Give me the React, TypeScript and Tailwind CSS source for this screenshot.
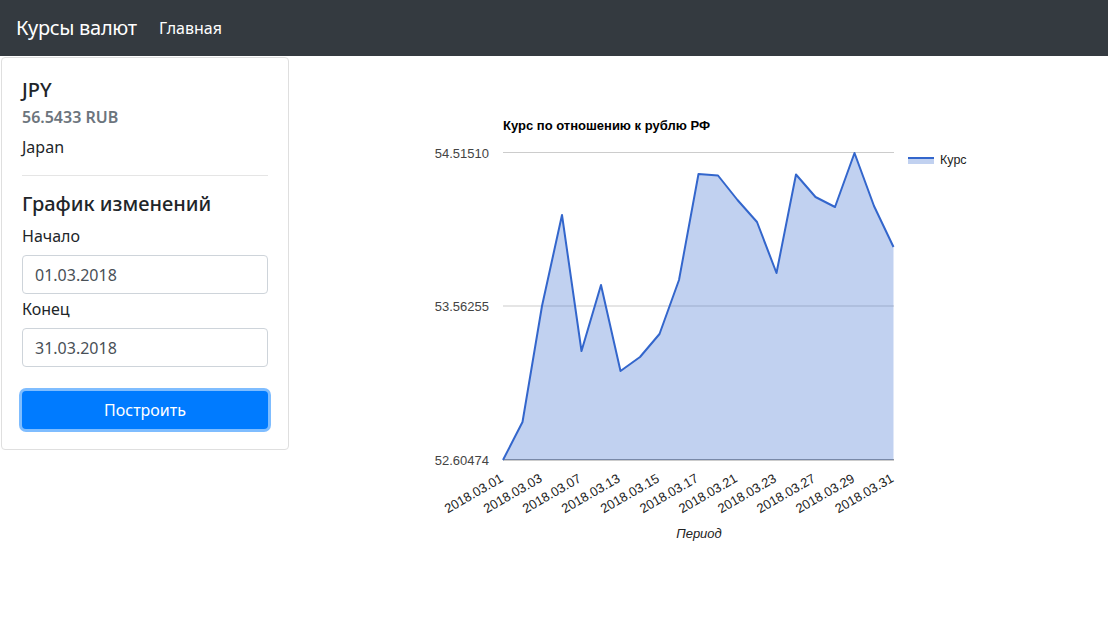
import React from "react";

const pts: [number, number][] = [
  [503, 460], [522.5, 422], [542, 306], [562, 215], [581.5, 351], [601, 285],
  [620.5, 371], [640, 357], [659.5, 334], [679, 280], [698.5, 174], [718, 175.5],
  [737.5, 200], [757, 222], [776.5, 273], [796, 174.5], [815.5, 197], [835, 207],
  [854.5, 153], [874, 206], [893.5, 247],
];

const labels = [
  "2018.03.01", "2018.03.03", "2018.03.07", "2018.03.13", "2018.03.15", "2018.03.17",
  "2018.03.21", "2018.03.23", "2018.03.27", "2018.03.29", "2018.03.31",
];

function Chart() {
  const line = pts.map((p, i) => (i ? "L" : "M") + p[0] + "," + p[1]).join(" ");
  const area = line + " L893.5,460 L503,460 Z";
  return (
    <svg width="808" height="563" style={{ fontFamily: '"Liberation Sans", Arial, sans-serif' }}>
      <g transform="translate(-300,-56)">
        <text x="503" y="129.5" fontSize="13" fontWeight="bold" fill="#000">
          Курс по отношению к рублю РФ
        </text>
        <rect x="503" y="152" width="391" height="1" fill="#cccccc" />
        <rect x="503" y="305.5" width="391" height="1" fill="#cccccc" />
        <rect x="503" y="459" width="391" height="1.5" fill="#999999" />
        <path d={area} fill="#3366cc" fillOpacity="0.3" />
        <path d={line} fill="none" stroke="#3366cc" strokeWidth="2" strokeLinejoin="round" />
        <text x="489" y="158" fontSize="13" fill="#444" textAnchor="end">54.51510</text>
        <text x="489" y="311" fontSize="13" fill="#444" textAnchor="end">53.56255</text>
        <text x="489" y="465" fontSize="13" fill="#444" textAnchor="end">52.60474</text>
        {labels.map((l, i) => {
          const x = 503 + i * 39.05 + 1;
          const y = 481;
          return (
            <text key={l} x={x} y={y} fontSize="13" fill="#222" textAnchor="end" transform={`rotate(-30 ${x} ${y})`}>
              {l}
            </text>
          );
        })}
        <text x="699" y="538" fontSize="13" fill="#222" fontStyle="italic" textAnchor="middle">
          Период
        </text>
        <rect x="908" y="157" width="26" height="7" fill="#3366cc" fillOpacity="0.3" />
        <rect x="908" y="157" width="26" height="2" fill="#3366cc" />
        <text x="940" y="163.5" fontSize="12.5" fill="#222">Курс</text>
      </g>
    </svg>
  );
}

export default function App() {
  return (
    <div className="min-h-screen w-full bg-white text-[#212529]" style={{ fontFamily: '"Noto Sans", "Open Sans", sans-serif' }}>
      <nav className="h-14 bg-[#343a40] flex items-center px-4">
        <span className="text-white text-[20px] leading-[30px] tracking-[-0.3px] w-[135px] whitespace-nowrap">Курсы валют</span>
        <span className="text-white text-base px-2">Главная</span>
      </nav>
      <div className="flex">
        <div className="w-[300px] shrink-0">
          <div className="ml-px mt-px w-[288px] border border-[#dfdfdf] rounded p-5">
            <h5 className="text-[20px] leading-6 font-medium mb-3">JPY</h5>
            <h6 className="text-base leading-[19px] font-semibold text-[#6c757d] -mt-1.5">56.5433 RUB</h6>
            <p className="text-base leading-6 mt-2">Japan</p>
            <hr className="my-4 border-t border-[#e5e5e5]" />
            <h5 className="text-[20px] leading-6 font-medium mb-2">График изменений</h5>
            <label className="block text-base leading-6 mb-[7px]">Начало</label>
            <input
              readOnly
              value="01.03.2018"
              className="block w-full h-[39px] px-3 border border-[#ced4da] rounded text-base text-[#495057] outline-none"
            />
            <label className="block text-base leading-6 pt-[3px] mb-[7px]">Конец</label>
            <input
              readOnly
              value="31.03.2018"
              className="block w-full h-[39px] px-3 border border-[#ced4da] rounded text-base text-[#495057] outline-none"
            />
            <button className="mt-6 w-full h-[38px] bg-[#007bff] text-white text-base rounded shadow-[0_0_0_3px_rgba(0,123,255,0.5)]">
              Построить
            </button>
          </div>
        </div>
        <Chart />
      </div>
    </div>
  );
}
